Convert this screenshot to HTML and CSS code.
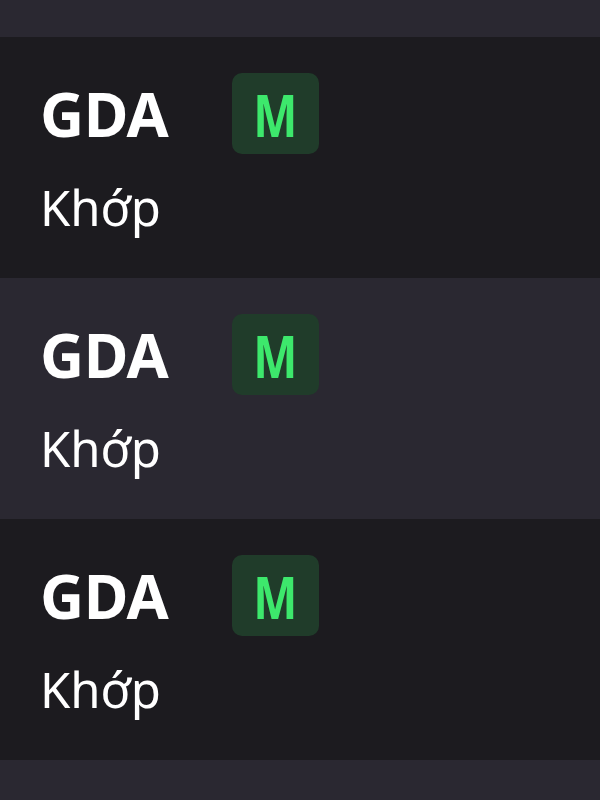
FILE: index.html
```html
<!DOCTYPE html>
<html lang="vi">
<head>
    <meta charset="UTF-8">
    <meta name="viewport" content="width=device-width, initial-scale=1.0">
    <title>Lệnh khớp</title>
    <link rel="stylesheet" href="styles.css">
</head>
<body>
    <!-- Danh sách lệnh -->
    <ul class="order-list">
        <li class="order-row row-light row-cut"></li>
        <li class="order-row row-dark">
            <div class="order-top">
                <span class="symbol">GDA</span>
                <span class="side-badge"><span class="side-letter">M</span></span>
            </div>
            <div class="status">Khớp</div>
        </li>
        <li class="order-row row-light">
            <div class="order-top">
                <span class="symbol">GDA</span>
                <span class="side-badge"><span class="side-letter">M</span></span>
            </div>
            <div class="status">Khớp</div>
        </li>
        <li class="order-row row-dark">
            <div class="order-top">
                <span class="symbol">GDA</span>
                <span class="side-badge"><span class="side-letter">M</span></span>
            </div>
            <div class="status">Khớp</div>
        </li>
        <li class="order-row row-light row-end"></li>
    </ul>
</body>
</html>
```

FILE: styles.css
```css
body {
    margin: 0;
    padding: 0;
    background-color: #2a2831;
    font-family: "Noto Sans", "Open Sans", sans-serif;
    color: #ffffff;
}

.order-list {
    list-style: none;
    margin: 0;
    padding: 0;
}

.order-row {
    height: 241px;
    box-sizing: border-box;
    padding: 36px 0 0 40px;
}

.row-cut {
    height: 37px;
    padding: 0;
}

.row-end {
    height: 41px;
    padding: 0;
}

.row-dark {
    background-color: #1c1b1f;
}

.row-light {
    background-color: #2a2831;
}

.order-top {
    display: flex;
    align-items: center;
    height: 81px;
}

.symbol {
    width: 192px;
    font-size: 61px;
    font-weight: 700;
    letter-spacing: -0.5px;
}

.side-badge {
    width: 87px;
    height: 81px;
    border-radius: 10px;
    background-color: #203c2a;
    display: flex;
    align-items: center;
    justify-content: center;
}

.side-letter {
    color: #3de86c;
    font-size: 60px;
    font-weight: 700;
    transform: scaleX(0.78);
}

.status {
    margin-top: 20px;
    font-size: 49px;
    font-weight: 400;
    line-height: normal;
}
```
